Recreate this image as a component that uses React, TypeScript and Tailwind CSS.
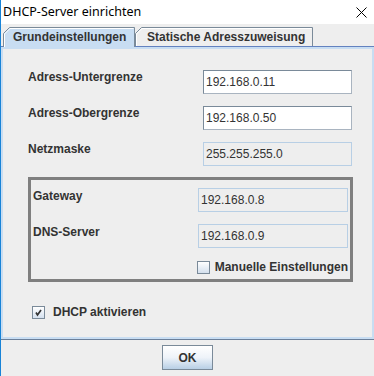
import React from "react";

function Field({ value, enabled, w }: { value: string; enabled: boolean; w: string }) {
  return (
    <div
      className={
        "h-[24px] flex items-center pl-[2px] text-[12px] text-[#333333] " +
        w +
        (enabled
          ? " bg-white border border-[#7a8a99] border-r-[#a9b4c0] border-b-[#a9b4c0]"
          : " bg-[#eeeeee] border border-[#b8cfe5]")
      }
    >
      {value}
    </div>
  );
}

function CheckBox({ checked }: { checked: boolean }) {
  return (
    <div className="w-[13px] h-[13px] border border-[#7a8a99] bg-gradient-to-b from-white to-[#d4e0ee] flex items-center justify-center shrink-0">
      {checked && (
        <svg width="11" height="11" viewBox="0 0 11 11">
          <path d="M3 5.5 L4.5 8 L8 3" fill="none" stroke="#333333" strokeWidth="1.7" />
        </svg>
      )}
    </div>
  );
}

export default function App() {
  return (
    <div className="w-[374px] h-[376px] bg-[#eeeeee] border-l border-[#1883d7] flex flex-col font-['Liberation_Sans',Arial,sans-serif] text-[#333333] overflow-hidden">
      {/* Title bar */}
      <div className="h-[24px] bg-white flex items-center justify-between pl-[2px] pr-[7px] shrink-0">
        <span className="text-[12.5px] text-black font-['Noto_Sans',sans-serif] leading-none">
          DHCP-Server einrichten
        </span>
        <svg width="11" height="11" viewBox="0 0 11 11">
          <path d="M0.5 0.5 L10.5 10.5 M10.5 0.5 L0.5 10.5" stroke="#000" strokeWidth="1" />
        </svg>
      </div>

      {/* Tab row */}
      <div className="mt-[3px] h-[20px] flex items-end shrink-0">
        <div className="w-[2px] h-[20px] border-b border-[#6382bf]" />
        <div className="relative w-[132px] h-[20px]">
          <svg className="absolute inset-0" width="132" height="20">
            <path d="M0.5 20 V6.5 L6.5 0.5 H131.5 V20" fill="#c8ddf2" stroke="#7a8a99" />
            <path d="M1.5 20 V7 L7 1.5 H130.5" fill="none" stroke="#ffffff" />
          </svg>
          <div className="relative h-[19px] flex items-center pl-[10px] text-[12px] font-bold">
            Grundeinstellungen
          </div>
        </div>
        <div className="relative w-[178px] h-[20px]">
          <svg className="absolute inset-0" width="178" height="20">
            <path d="M0.5 19 V6.5 L6.5 0.5 H177.5 V19" fill="#eeeeee" stroke="#7a8a99" />
            <path d="M1.5 19 V7 L7 1.5 H176.5" fill="none" stroke="#ffffff" />
            <path d="M0 19.5 H178" stroke="#6382bf" />
          </svg>
          <div className="relative h-[19px] flex items-center pl-[12px] text-[12px] font-bold">
            Statische Adresszuweisung
          </div>
        </div>
        <div className="flex-1 h-[20px] border-b border-[#6382bf]" />
      </div>

      {/* Tab content panel */}
      <div className="h-[293px] w-[373px] shrink-0 border-b border-[#6b7f99]">
        <div className="h-[292px] border-[2px] border-[#c8ddf2] flex flex-col pt-[21px] pl-[25px]">
          <div className="flex">
            <div className="w-[175px] text-[12px] font-bold leading-[15px]">Adress-Untergrenze</div>
            <Field value="192.168.0.11" enabled={true} w="w-[149px]" />
          </div>
          <div className="flex mt-[12px]">
            <div className="w-[175px] text-[12px] font-bold leading-[15px]">Adress-Obergrenze</div>
            <Field value="192.168.0.50" enabled={true} w="w-[149px]" />
          </div>
          <div className="flex mt-[12px]">
            <div className="w-[175px] text-[12px] font-bold leading-[15px]">Netzmaske</div>
            <Field value="255.255.255.0" enabled={false} w="w-[149px]" />
          </div>

          <div className="mt-[11px] w-[325px] h-[105px] border-[3px] border-[#7f7f7f] flex flex-col pt-[8px] pl-[2px] pr-[2px]">
            <div className="flex">
              <div className="w-[165px] text-[12px] font-bold leading-[17px]">Gateway</div>
              <Field value="192.168.0.8" enabled={false} w="w-[150px]" />
            </div>
            <div className="flex mt-[12px]">
              <div className="w-[165px] text-[12px] font-bold leading-[17px]">DNS-Server</div>
              <Field value="192.168.0.9" enabled={false} w="w-[150px]" />
            </div>
            <div className="flex justify-end items-center mt-[13px] gap-[5px]">
              <CheckBox checked={false} />
              <span className="text-[12px] font-bold leading-[13px]">Manuelle Einstellungen</span>
            </div>
          </div>

          <div className="flex items-center mt-[24px] ml-[4px] gap-[8px]">
            <CheckBox checked={true} />
            <span className="text-[12px] font-bold leading-[13px]">DHCP aktivieren</span>
          </div>
        </div>
      </div>

      {/* Button area */}
      <div className="flex justify-center pt-[5px]">
        <div className="w-[51px] h-[25px] border border-[#7a8a99] bg-gradient-to-b from-white via-[#eef3f9] to-[#b8cfe5] flex items-center justify-center text-[12px] font-bold">
          OK
        </div>
      </div>
    </div>
  );
}
